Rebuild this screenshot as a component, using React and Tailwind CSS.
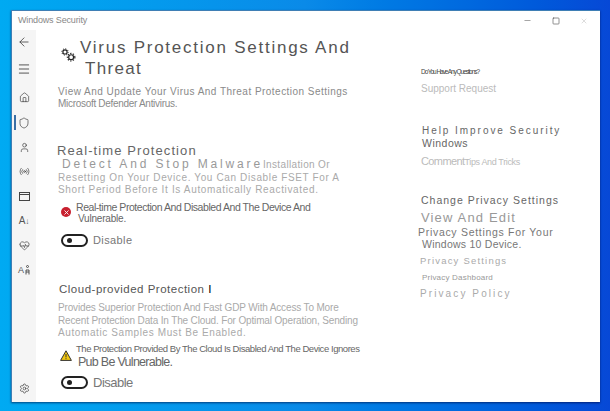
import { ArrowLeft, Menu, Home, Shield, User, Radio, HeartPulse, Settings, Minus, Square, X } from "lucide-react";

const font = { fontFamily: '"Liberation Sans", Arial, sans-serif' };

function Line({ className = "", children }) {
  return <div className={"whitespace-nowrap " + className}>{children}</div>;
}

function Gears() {
  return (
    <svg width="15" height="14" viewBox="0 0 17 16" fill="none" stroke="#222" className="shrink-0">
      <circle cx="4.5" cy="4.5" r="2.4" strokeWidth="1.3" />
      <circle cx="4.5" cy="4.5" r="3.6" strokeWidth="1.1" strokeDasharray="1.3 1.5" />
      <circle cx="11.5" cy="10.5" r="2.8" strokeWidth="1.4" />
      <circle cx="11.5" cy="10.5" r="4.3" strokeWidth="1.3" strokeDasharray="1.5 1.6" />
    </svg>
  );
}

function Toggle() {
  return (
    <div className="flex h-[13px] w-[27px] shrink-0 items-center rounded-full border-2 border-[#222] bg-white pl-[4px]">
      <div className="size-[5px] rounded-full bg-[#222]" />
    </div>
  );
}

function NavRow({ children, active, h = "h-[24.4px]" }) {
  return (
    <div className={"relative flex w-full items-center justify-center " + h}>
      {active && <div className="absolute top-[4px] left-[2px] h-[15px] w-[2px] bg-[#3a6ea5]" />}
      {children}
    </div>
  );
}

function Sidebar() {
  const ic = { size: 11, strokeWidth: 1.4, color: "#333" };
  return (
    <aside className="flex w-[24px] shrink-0 flex-col items-center bg-[#f5f5f5] pb-[6px]">
      <NavRow h="h-[24px]"><ArrowLeft size={14} strokeWidth={1.3} color="#333" /></NavRow>
      <NavRow h="h-[30px]"><Menu size={14} strokeWidth={1.4} color="#333" /></NavRow>
      <NavRow h="h-[27px]"><Home {...ic} /></NavRow>
      <NavRow active><Shield size={12} strokeWidth={1.3} color="#333" /></NavRow>
      <NavRow><User {...ic} /></NavRow>
      <NavRow><Radio {...ic} /></NavRow>
      <NavRow>
        <svg width="11" height="9" viewBox="0 0 11 9" fill="none" stroke="#444">
          <rect x=".5" y=".5" width="10" height="8" />
          <path d="M.5 2.5h10" />
        </svg>
      </NavRow>
      <NavRow>
        <span className="text-[10px] text-[#555]">A<span className="text-[8px]">↓</span></span>
      </NavRow>
      <NavRow><HeartPulse {...ic} /></NavRow>
      <NavRow>
        <span className="flex items-end text-[9px] leading-none text-[#555]">
          A
          <svg width="5" height="10" viewBox="0 0 5 10" fill="none" stroke="#444" strokeWidth=".9" className="ml-[1px]">
            <circle cx="2.5" cy="1.5" r="1" />
            <path d="M1 9.5V5h3v4.5M1 7h3" />
          </svg>
        </span>
      </NavRow>
      <div className="flex-1" />
      <NavRow h="h-[16px]"><Settings {...ic} /></NavRow>
    </aside>
  );
}

function Main() {
  return (
    <main className="w-[382px] shrink-0 pl-[22px]">
      <div className="mt-[7px] flex h-[21px] items-center text-[17px] tracking-[1.75px] text-[#555]">
        <div className="mt-[14px] mr-[4px] ml-[3px]"><Gears /></div>
        <Line>Virus Protection Settings And</Line>
      </div>
      <Line className="mt-[0px] ml-[27px] h-[21px] text-[17px] leading-[21px] tracking-[1.3px] text-[#555]">Threat</Line>
      <Line className="mt-[7px] h-[12px] text-[10px] leading-[12px] tracking-[0.47px] text-[#8a8a8a]">View And Update Your Virus And Threat Protection Settings</Line>
      <Line className="h-[12px] text-[10px] leading-[12px] tracking-[-0.3px] text-[#8a8a8a]">Microsoft Defender Antivirus.</Line>

      <Line className="mt-[33px] -ml-[1px] h-[15px] text-[13px] leading-[15px] tracking-[1.1px] text-[#666]">Real-time Protection</Line>
      <Line className="h-[13px] text-[10px] leading-[13px] text-[#999]">
        <span className="ml-[4px] text-[12px] tracking-[2.85px]">Detect And Stop Malware</span>
        <span className="tracking-[0.35px] text-[#aaa]">Installation Or</span>
      </Line>
      <Line className="mt-[1px] h-[12px] text-[10px] leading-[12px] tracking-[0.63px] text-[#aaa]">Resetting On Your Device. You Can Disable FSET For A</Line>
      <Line className="h-[12px] text-[10px] leading-[12px] tracking-[0.65px] text-[#aaa]">Short Period Before It Is Automatically Reactivated.</Line>

      <div className="mt-[5px] flex h-[24px]">
        <div className="mt-[6px] mr-[5px] ml-[3px] flex size-[10px] shrink-0 items-center justify-center rounded-full bg-[#c8202f] text-white"><X size={7} strokeWidth={3} /></div>
        <div>
          <Line className="h-[12px] text-[10.5px] leading-[12px] tracking-[-0.45px] text-[#666]">Real-time Protection And Disabled And The Device And</Line>
          <Line className="ml-[2px] h-[12px] text-[10px] leading-[12px] tracking-[-0.2px] text-[#666]">Vulnerable.</Line>
        </div>
      </div>
      <div className="mt-[9px] ml-[3px] flex h-[13px] items-center gap-[5px]">
        <Toggle />
        <Line className="text-[11px] tracking-[0.4px] text-[#777]">Disable</Line>
      </div>

      <Line className="mt-[35px] ml-[1px] h-[14px] text-[11.5px] leading-[14px] tracking-[0.5px] text-[#555]">Cloud-provided Protection <span className="text-black">I</span></Line>
      <Line className="mt-[6px] h-[12px] text-[10px] leading-[12px] tracking-[-0.15px] text-[#aaa]">Provides Superior Protection And Fast GDP With Access To More</Line>
      <Line className="mt-[1px] h-[12px] text-[10px] leading-[12px] tracking-[-0.15px] text-[#aaa]">Recent Protection Data In The Cloud. For Optimal Operation, Sending</Line>
      <Line className="h-[12px] text-[10px] leading-[12px] tracking-[0.6px] text-[#aaa]">Automatic Samples Must Be Enabled.</Line>

      <div className="mt-[7px] flex h-[22px]">
        <svg width="12" height="11" viewBox="0 0 12 11" className="mt-[4px] mr-[4px] ml-[2px] shrink-0">
          <path d="M6 .8 11.4 10.4H.6Z" fill="#f2c811" stroke="#333" strokeWidth="1" />
          <path d="M6 4v3.4M6 8.2v1" stroke="#333" strokeWidth="1" />
        </svg>
        <div className="-mt-[2px]">
          <Line className="h-[10px] text-[9.5px] leading-[10px] tracking-[-0.45px] text-[#666]">The Protection Provided By The Cloud Is Disabled And The Device Ignores</Line>
          <Line className="mt-[2px] ml-[2px] h-[12px] text-[12.5px] leading-[12px] tracking-[-0.72px] text-[#666]">Pub Be Vulnerable.</Line>
        </div>
      </div>
      <div className="mt-[8px] ml-[3px] flex h-[13px] items-center gap-[5px]">
        <Toggle />
        <Line className="text-[13px] tracking-[-0.5px] text-[#777]">Disable</Line>
      </div>
    </main>
  );
}

function Aside() {
  return (
    <aside className="flex-1 pl-[2px]">
      <Line className="mt-[37px] ml-[1px] h-[10px] text-[6.5px] leading-[10px] tracking-[-1.05px] text-[#444]">Do You Have Any Questions?</Line>
      <Line className="mt-[6px] ml-[1px] h-[12px] text-[10px] leading-[12px] tracking-[0px] text-[#bbb]">Support Request</Line>

      <Line className="mt-[30px] ml-[2px] h-[12px] text-[10px] leading-[12px] tracking-[1.95px] text-[#666]">Help Improve Security</Line>
      <Line className="ml-[2px] h-[13px] text-[10.5px] leading-[13px] tracking-[0.5px] text-[#666]">Windows</Line>
      <Line className="mt-[3px] ml-[1px] h-[14px] leading-[14px] text-[#bbb]">
        <span className="text-[11px] tracking-[-0.6px]">Comment</span>
        <span className="text-[9px] tracking-[-0.35px]">Tips And Tricks</span>
      </Line>

      <Line className="mt-[26px] ml-[1px] h-[14px] text-[10.5px] leading-[14px] tracking-[1px] text-[#666]">Change Privacy Settings</Line>
      <Line className="mt-[3px] ml-[1px] h-[16px] text-[13px] leading-[16px] tracking-[1.15px] text-[#999]">View And Edit</Line>
      <Line className="-ml-[2px] h-[12px] text-[10.5px] leading-[12px] tracking-[0.7px] text-[#777]">Privacy Settings For Your</Line>
      <Line className="ml-[2px] h-[12px] text-[10.5px] leading-[12px] tracking-[0.25px] text-[#777]">Windows 10 Device.</Line>
      <Line className="mt-[5px] h-[12px] text-[9.5px] leading-[12px] tracking-[1.2px] text-[#aaa]">Privacy Settings</Line>
      <Line className="mt-[5px] ml-[2px] h-[12px] text-[8px] leading-[12px] tracking-[0.2px] text-[#999]">Privacy Dashboard</Line>
      <Line className="mt-[4px] h-[12px] text-[10px] leading-[12px] tracking-[2.1px] text-[#aaa]">Privacy Policy</Line>
    </aside>
  );
}

export default function App() {
  return (
    <div style={font} className="h-[411px] w-[610px] overflow-hidden bg-gradient-to-r from-[#00aaf2] via-[#0a8ae8] to-[#0748d6] pt-[10px] pl-[11px]">
      <div className="flex h-[392px] w-[589px] flex-col overflow-hidden border-t border-l border-[#3f7fb5] bg-white shadow-[0_1px_2px_rgba(0,0,50,0.6)]">
        <header className="flex h-[19px] shrink-0 items-center justify-between pr-[12px] pl-[6px]">
          <span className="text-[9px] tracking-[-0.15px] text-[#888]">Windows Security</span>
          <div className="flex items-center gap-[20px] text-[#555]">
            <Minus size={9} strokeWidth={1.4} />
            <Square size={8} strokeWidth={1.6} color="#333" />
            <X size={8} strokeWidth={1} color="#999" />
          </div>
        </header>
        <div className="flex min-h-0 flex-1">
          <Sidebar />
          <Main />
          <Aside />
        </div>
      </div>
    </div>
  );
}
